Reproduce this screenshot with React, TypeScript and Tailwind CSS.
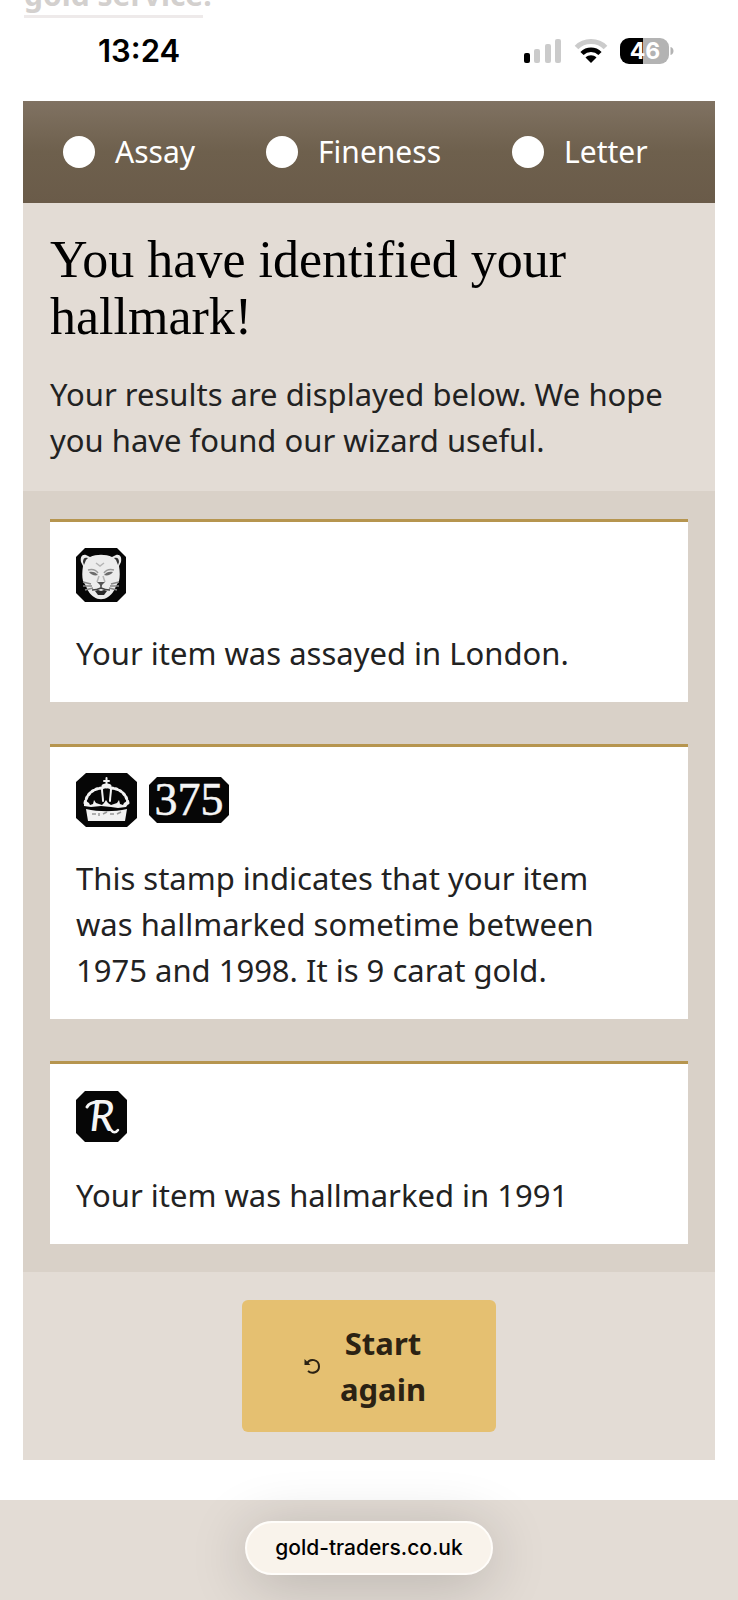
import type { ReactNode } from 'react';

const steps = ['Assay', 'Fineness', 'Letter'];

const LeopardMark = () => (
    <svg width="50" height="54" viewBox="0 0 50 54" aria-label="Leopard's head" role="img">
        <path d="M9 0h32l9 9v36l-9 9H9l-9-9V9z" fill="#060606" />
        <path d="M5 14c-1-5 1-8 5-7l4 2c6-3 16-3 22 0l4-2c4-1 6 2 5 7l-2 4c1 6 1 11 0 15l-3 5c-2 6-5 9-8 11-4 3-10 3-14 0-3-2-6-5-8-11l-3-5c-1-4-1-9 0-15z" fill="#ececec" />
        <path d="M7 14c0-4 2-5 5-4l-2 2-2 5zM43 14c0-4-2-5-5-4l2 2 2 5z" fill="#333" />
        <path d="M13 24c3-1 7 0 9 3-3 1-7 0-9-3zM37 24c-3-1-7 0-9 3 3 1 7 0 9-3z" fill="#6b6b6b" />
        <path d="M12 22c4-1 8 0 10 3M38 22c-4-1-8 0-10 3" fill="none" stroke="#9a9a9a" strokeWidth="1.5" />
        <path d="M20 15l4 3 4-3M23 28l-2 6M27 28l2 6" fill="none" stroke="#b5b5b5" strokeWidth="1.5" />
        <path d="M21 34h8l-4 4z" fill="#555" />
        <path d="M25 37v4M16 42c4 0 7-1 9-2 2 1 5 2 9 2" fill="none" stroke="#444" strokeWidth="1.5" />
        <path d="M19 43l3-1 3 1 3-1 3 1-3 4h-6z" fill="#2a2a2a" />
        <path d="M7 34l8 2M7 38l9 0M9 42l8-2M43 34l-8 2M43 38l-9 0M41 42l-8-2" stroke="#888" strokeWidth="1.5" />
    </svg>
);

const CrownMark = () => (
    <svg width="61" height="54" viewBox="0 0 61 54" aria-label="Crown" role="img">
        <path d="M10 0h41l10 9v36l-10 9H10L0 45V9z" fill="#060606" />
        <g fill="none" stroke="#f2f2f2" strokeLinecap="round">
            <path d="M9 30C11 20 18 15 28 15M52 30C50 20 43 15 33 15" strokeWidth="3" strokeDasharray="2 2.500" />
            <path d="M9 30C11 20 18 15 28 15M52 30C50 20 43 15 33 15" strokeWidth="1.500" />
            <path d="M26 16c0 4 1 8 1 12M35 16c0 4-1 8-1 12" strokeWidth="2" />
            <path d="M30.500 5v7M28 8h5" strokeWidth="2" />
        </g>
        <ellipse cx="30.500" cy="13" rx="5" ry="2.500" fill="#f2f2f2" />
        <path d="M8 30l2-2 3 2 1 2 3-1 1-4 2 3 3 1 3 1 2-2 2-3 2 3 3 2 3-1 3-1 2-3 1 4 3 1 1-2 3-2 2 2-3 4-8 1-7-1-10-1-10 1-7-1z" fill="#f2f2f2" />
        <path d="M10 36c13 3 28 3 41 0l-2 12H12z" fill="#f2f2f2" />
        <path d="M16 41h4M23 40v3M27 41l4-2M34 41h4M41 41l4-2" stroke="#999" strokeWidth="1.500" />
    </svg>
);

const FinenessMark = () => (
    <svg width="80" height="46" viewBox="0 0 80 46" aria-label="375" role="img">
        <path d="M8 0h64l8 8v30l-8 8H8l-8-8V8z" fill="#060606" />
        <text x="40" y="38" textAnchor="middle" fontFamily="'Liberation Serif', serif" fontSize="46" fill="#f5f5f5" stroke="#f5f5f5" strokeWidth="0.5">
            375
        </text>
    </svg>
);

const LetterMark = () => (
    <svg width="51" height="54" viewBox="0 0 51 54" aria-label="R" role="img">
        <path d="M9 1h33l9 9v33l-9 9H9l-9-9V10z" fill="#060606" />
        <path d="M11 17c2-4 6-5 12-5" fill="none" stroke="#f5f5f5" strokeWidth="3" strokeLinecap="round" />
        <path d="M35 40c2 3 5 3 7 0" fill="none" stroke="#f5f5f5" strokeWidth="2.500" strokeLinecap="round" />
        <text x="26" y="41" textAnchor="middle" fontFamily="Lato, sans-serif" fontSize="42" fontStyle="italic" fontWeight="500" fill="#f5f5f5">
            R
        </text>
    </svg>
);

const results: { marks: ReactNode; text: string }[] = [
    { marks: <LeopardMark />, text: 'Your item was assayed in London.' },
    {
        marks: (
            <>
                <CrownMark />
                <FinenessMark />
            </>
        ),
        text: 'This stamp indicates that your item was hallmarked sometime between 1975 and 1998. It is 9 carat gold.',
    },
    { marks: <LetterMark />, text: 'Your item was hallmarked in 1991' },
];

const StatusBar = () => (
    <div className="relative h-[101px] overflow-hidden px-6">
        {/* tail of the page copy scrolled under the status bar */}
        <p className="absolute -top-7 left-6 text-[30px] leading-[46px] font-bold text-[#d3d0ce]">
            <span className="border-b-3 border-[#eeeaea]">gold service</span>.
        </p>
        <div className="flex h-full items-center justify-between pr-10 pl-[74px] font-['Inter',sans-serif]">
            <span className="text-[31px] leading-10 font-semibold text-black">13:24</span>
            <div className="flex items-center gap-3">
                <svg width="38" height="24" viewBox="0 0 38 24" aria-label="Signal">
                    <rect x="0" y="14" width="6" height="10" rx="2" fill="#000" />
                    <rect x="10" y="10" width="6" height="14" rx="2" fill="#cbcbcb" />
                    <rect x="21" y="5" width="6" height="19" rx="2" fill="#cbcbcb" />
                    <rect x="31" y="0" width="6" height="24" rx="2" fill="#cbcbcb" />
                </svg>
                <svg width="34" height="24" viewBox="0 0 34 24" aria-label="Wi-Fi">
                    <path d="M2.500 8.500C10 .5 24 .5 31.500 8.500" fill="none" stroke="#cbcbcb" strokeWidth="5" />
                    <path d="M8 14.500c5-5 13-5 18 0" fill="none" stroke="#000" strokeWidth="4.500" />
                    <path d="M17 24l-5.500-5.500c3-3 8-3 11 0z" fill="#000" />
                </svg>
                <svg width="54" height="26" viewBox="0 0 54 26" aria-label="Battery 46%">
                    <path d="M9 0h14v26H9a9 9 0 0 1-9-9V9a9 9 0 0 1 9-9z" fill="#000" />
                    <path d="M23 0h17a9 9 0 0 1 9 9v8a9 9 0 0 1-9 9H23z" fill="#b3b3b3" />
                    <path d="M50.500 9c4 1 4 7 0 8z" fill="#b3b3b3" />
                    <text x="25" y="21" textAnchor="middle" fontFamily="Inter, sans-serif" fontSize="23" fontWeight="700" fill="#fff">
                        46
                    </text>
                </svg>
            </div>
        </div>
    </div>
);

const ResultCard = ({ marks, text }: { marks: ReactNode; text: string }) => (
    <li className="border-t-3 border-[#b6954f] bg-white py-[26px] pr-10 pl-[26px]">
        <div className="mb-7 flex items-center gap-3">{marks}</div>
        <p>{text}</p>
    </li>
);

export default function App() {
    return (
        <div className="flex min-h-screen flex-col bg-white font-['Noto_Sans',sans-serif] text-[31px] leading-[46px] text-[#222]">
            <StatusBar />

            <main className="mx-[23px] bg-[#e3dcd5]">
                <ol className="flex h-[102px] items-center gap-[71px] bg-linear-to-b from-[#807262] via-[#6e604d] to-[#6a5b49] px-10 text-[30px] text-white">
                    {steps.map((step) => (
                        <li key={step} className="flex items-center gap-5">
                            <span className="size-8 rounded-full bg-white" />
                            {step}
                        </li>
                    ))}
                </ol>

                <section className="px-[27px] py-7">
                    <h1 className="mb-[26px] font-['Liberation_Serif',serif] text-[52px] leading-[57px] text-black">
                        You have identified your hallmark!
                    </h1>
                    <p>Your results are displayed below. We hope you have found our wizard useful.</p>
                </section>

                <ul className="flex flex-col gap-[42px] bg-[#d9d1c8] px-[27px] py-7">
                    {results.map((result) => (
                        <ResultCard key={result.text} {...result} />
                    ))}
                </ul>

                <div className="flex justify-center py-7">
                    <button
                        type="button"
                        className="flex w-[254px] items-center gap-3 rounded-md bg-[#e5c071] px-[62px] py-5 font-bold text-[#2b2213]"
                    >
                        <svg width="16" height="16" viewBox="0 0 16 16" className="shrink-0" aria-hidden="true">
                            <path d="M3 5.500C6-.5 15 1.500 15 8.500c0 6-7 8-11 4.500" fill="none" stroke="currentColor" strokeWidth="2" />
                            <path d="M.5 1v6h6z" fill="currentColor" />
                        </svg>
                        <span className="flex-1">Start again</span>
                    </button>
                </div>
            </main>

            <footer className="mt-10 flex flex-1 items-start justify-center bg-[#e3dcd5] px-6 pt-[21px] pb-6">
                <a
                    href="#"
                    className="rounded-full border-2 border-[#fffdfa] bg-[#f9f3eb] px-7 py-0.5 font-['Inter',sans-serif] text-[21px] font-medium text-black shadow-[0_8px_60px_rgba(0,0,0,0.2)]"
                >
                    gold-traders.co.uk
                </a>
            </footer>
        </div>
    );
}
